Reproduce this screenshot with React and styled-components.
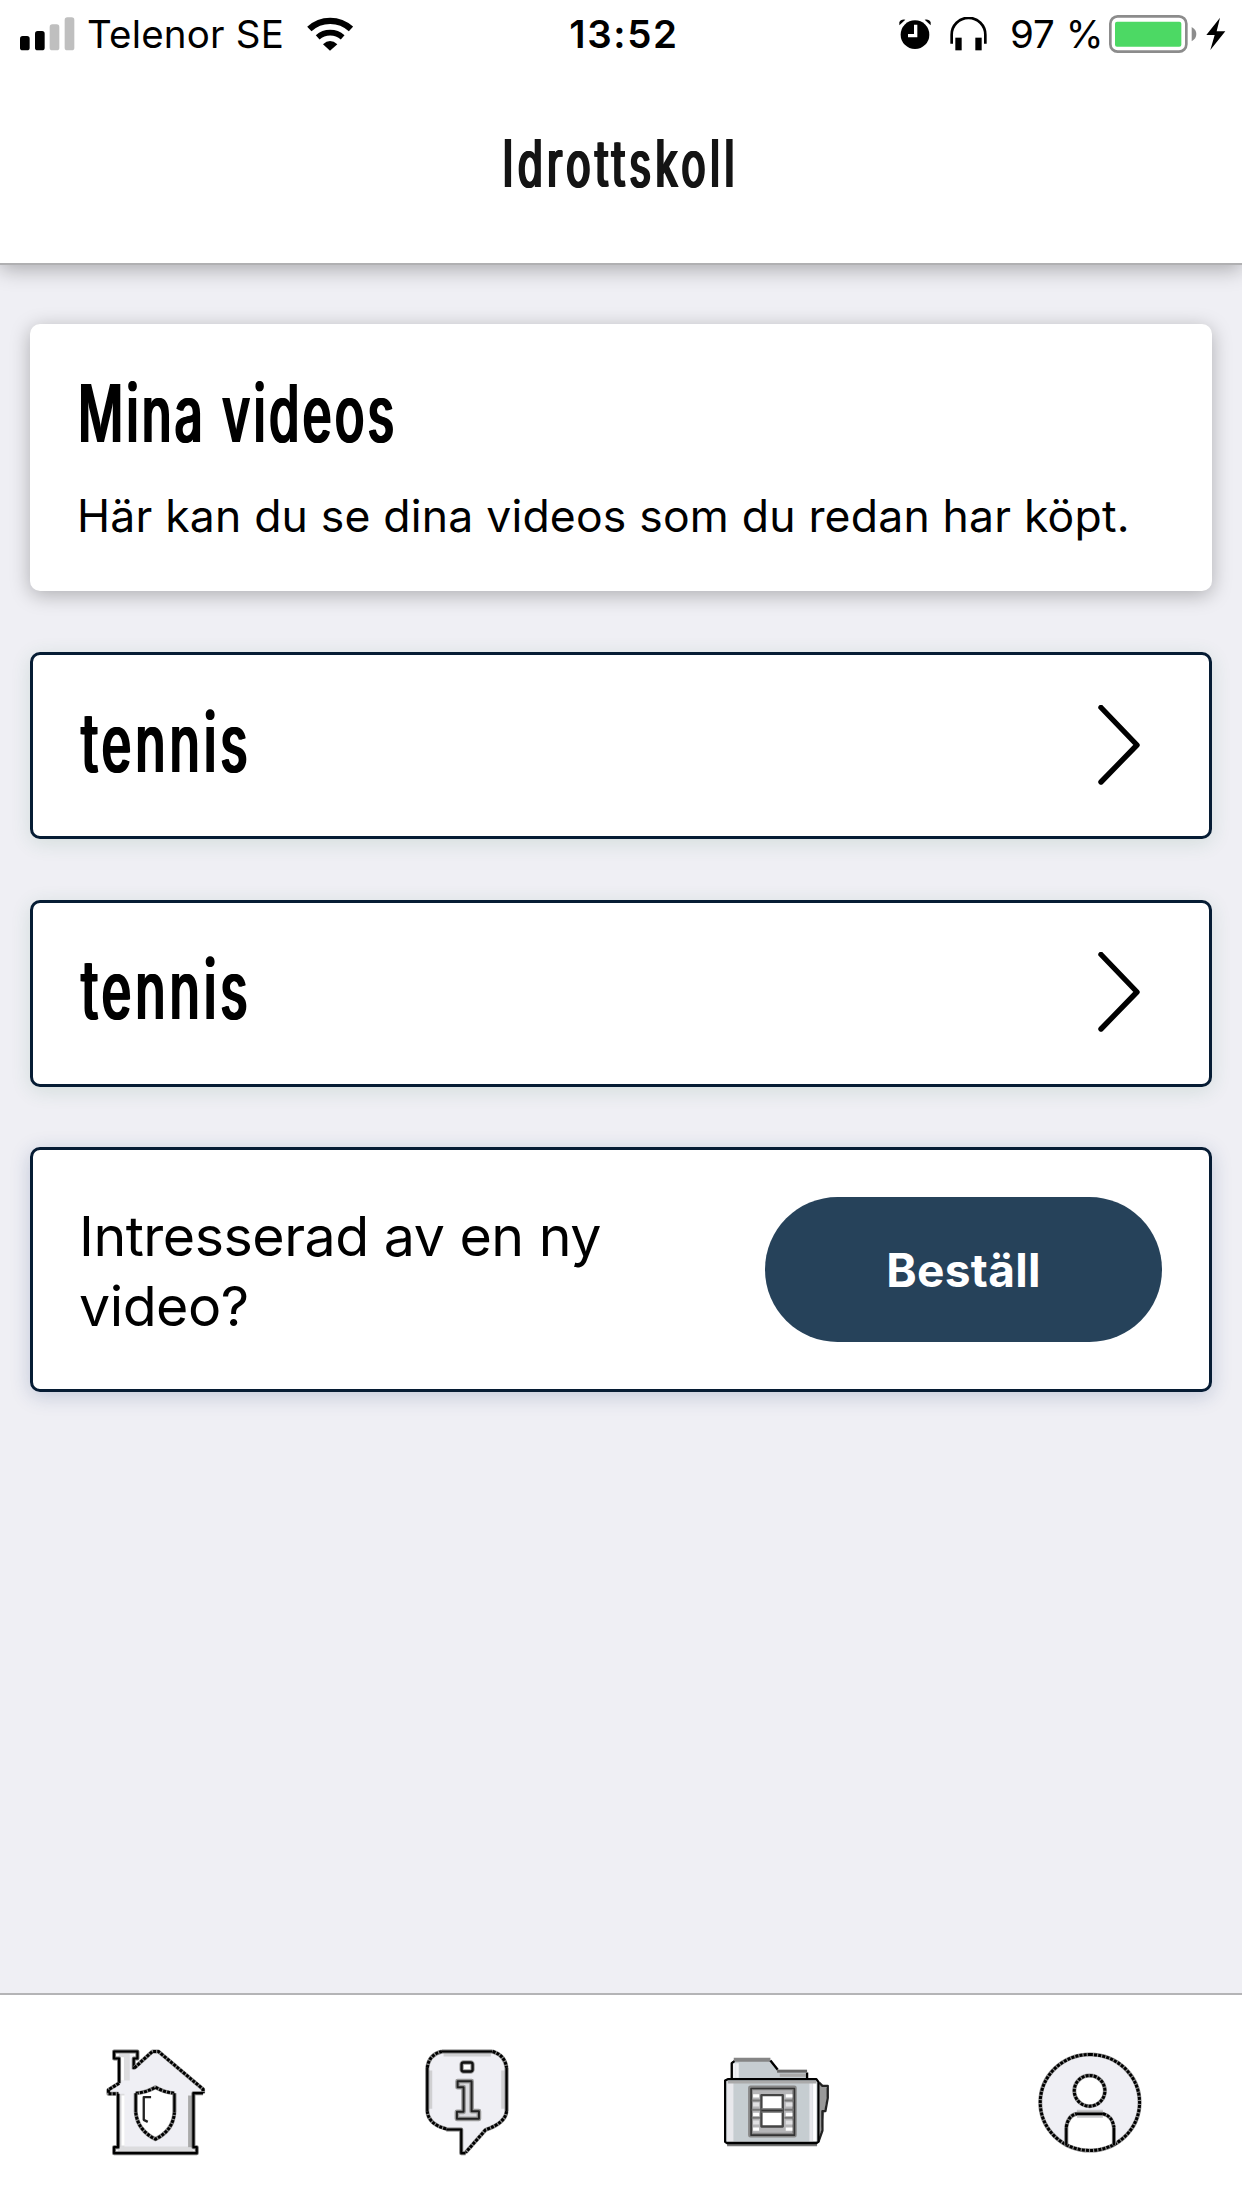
import React from "react";
import styled, { createGlobalStyle } from "styled-components";

const GlobalStyle = createGlobalStyle`
  * { box-sizing: border-box; }
  body { margin: 0; background: #efeff4; }
`;

const Screen = styled.div`
  width: 1242px;
  height: 2208px;
  display: flex;
  flex-direction: column;
  background: #efeff4;
  color: #000;
  font-family: Inter, "Liberation Sans", sans-serif;
  overflow: hidden;
`;

const Header = styled.header`
  flex: none;
  height: 265px;
  background: #fff;
  border-bottom: 2px solid #b0b0b2;
  box-shadow: 0 4px 20px rgba(0, 0, 0, 0.3);
`;

const StatusBar = styled.div`
  height: 68px;
  display: grid;
  grid-template-columns: 1fr auto 1fr;
  align-items: center;
  padding: 0 16px 0 20px;
  font-size: 38.5px;
  line-height: 68px;
`;

const StatusGroup = styled.div`
  display: flex;
  align-items: center;
  justify-content: ${(p) => (p.$end ? "flex-end" : "flex-start")};
`;

const StatusText = styled.span`
  width: ${(p) => p.$width}px;
  margin-left: ${(p) => p.$gap}px;
  letter-spacing: ${(p) => p.$spacing || 0}px;
  white-space: nowrap;
`;

const Clock = styled.time`
  font-weight: 600;
  padding-left: 2px;
  letter-spacing: 1.6px;
`;

const Glyph = styled.svg`
  display: block;
  flex: none;
  margin-left: ${(p) => p.$gap || 0}px;
`;

const TitleBar = styled.div`
  height: 195px;
  display: flex;
  justify-content: center;
  padding-top: 56px;
`;

const Condensed = styled.span`
  display: block;
  white-space: nowrap;
  font-family: Inter, "Liberation Sans", sans-serif;
  font-weight: 500;
  line-height: 1.2;
  font-size: ${(p) => p.$size}px;
  letter-spacing: ${(p) => p.$spacing || 0}px;
  transform: scaleX(${(p) => p.$scale});
  transform-origin: ${(p) => p.$origin || "left"} center;
  text-shadow: 1.5px 0 0 currentColor, -1.5px 0 0 currentColor;
`;

const PageTitle = styled(Condensed).attrs({ as: "h1" })`
  margin: 0;
  color: #141414;
`;

const Heading = styled(Condensed).attrs({ as: "h2" })`
  margin: ${(p) => p.$lift || 0}px 0 0 ${(p) => p.$shift || 0}px;
`;

const Content = styled.main`
  flex: 1;
  display: flex;
  flex-direction: column;
  padding: 59px 30px 0;
`;

const IntroCard = styled.section`
  height: 267px;
  margin-bottom: 61px;
  padding: 41px 49px 0;
  background: #fff;
  border-radius: 10px;
  box-shadow: 0 4px 20px rgba(0, 0, 0, 0.28);
`;

const IntroText = styled.p`
  margin: 25px 0 0 -2px;
  font-size: 44.5px;
  line-height: 60px;
  letter-spacing: 0.2px;
  white-space: nowrap;
`;

const OutlinedCard = styled.section`
  height: ${(p) => p.$height}px;
  margin-bottom: 60.5px;
  display: flex;
  align-items: center;
  justify-content: space-between;
  padding: 0 ${(p) => p.$right}px 0 47px;
  background: #fff;
  border: 3px solid #061c34;
  border-radius: 10px;
  box-shadow: 0 4px 20px ${(p) => p.$glow};
`;

const Question = styled.p`
  width: 560px;
  margin: 2px 0 0 -1px;
  font-size: 55.5px;
  line-height: 69.5px;
  letter-spacing: -0.5px;
`;

const OrderButton = styled.button`
  width: 397px;
  height: 145px;
  border: 0;
  border-radius: 73px;
  background: #26425a;
  color: #fff;
  font: 700 46px/1 Inter, "Liberation Sans", sans-serif;
  letter-spacing: 0.3px;
`;

const TabBar = styled.nav`
  flex: none;
  height: 215px;
  display: grid;
  grid-template-columns: repeat(4, 1fr);
  background: #fff;
  border-top: 2px solid #b4b4b6;
`;

const Tab = styled.a`
  display: flex;
  align-items: center;
  justify-content: center;
`;

const TabIcon = styled.svg`
  width: 106px;
  height: 106px;
  overflow: visible;
  fill: none;
  stroke-linejoin: round;
`;

const Edge = ({ d, fill = "none", dash }) => (
  <>
    <path d={d} fill={fill} stroke={dash ? "#8c8c8c" : "#777"} strokeWidth="12" />
    <path d={d} stroke="#000" strokeWidth={dash ? 9 : 6.5} strokeDasharray={dash ? "9 3.5" : undefined} />
  </>
);

const SignalIcon = () => (
  <Glyph width="55" height="34" viewBox="60 48 165 102">
    <rect x="60" y="105" width="29" height="43" rx="8" />
    <rect x="105" y="90" width="29" height="58" rx="8" />
    <rect x="149" y="70" width="29" height="78" rx="8" fill="#bfbfbf" />
    <rect x="194" y="49" width="29" height="99" rx="8" fill="#bfbfbf" />
  </Glyph>
);

const WifiIcon = () => (
  <Glyph width="46" height="34" viewBox="919 48 138 102">
    <path d="M926 84A92 92 0 0 1 1051 84" fill="none" stroke="#000" strokeWidth="19" />
    <path d="M951 109A57 57 0 0 1 1026 109" fill="none" stroke="#000" strokeWidth="17" />
    <path d="M967 130Q988 110 1010 130L988 149Z" />
  </Glyph>
);

const AlarmIcon = () => (
  <Glyph width="32" height="32" viewBox="57 51 96 96">
    <circle cx="105" cy="101" r="43" />
    <path d="M58 73V64Q62 54 76 56ZM152 73V64Q148 54 134 56Z" />
    <path d="M107 71V104H84" fill="none" stroke="#fff" strokeWidth="10" />
  </Glyph>
);

const HeadphonesIcon = () => (
  <Glyph $gap={19} width="37" height="34" viewBox="211 49 111 102">
    <path d="M216 129V102A50 50 0 0 1 317 102V129" fill="none" stroke="#000" strokeWidth="8" />
    <rect x="227" y="111" width="19" height="38" />
    <rect x="287" y="111" width="19" height="38" />
  </Glyph>
);

const BatteryIcon = () => (
  <Glyph width="88" height="38" viewBox="690 44 264 114">
    <rect x="694" y="48" width="228" height="106" rx="22" fill="#fff" stroke="#8c8c8c" strokeWidth="8" />
    <rect x="708" y="64" width="199" height="75" rx="6" fill="#4cd964" />
    <path d="M938 80Q952 88 952 101Q952 115 938 123Z" fill="#8c8c8c" />
  </Glyph>
);

const BoltIcon = () => (
  <Glyph $gap={9} width="20" height="34" viewBox="979 49 60 102">
    <path d="M1021 51L980 103H1005L992 148L1037 92H1011Z" />
  </Glyph>
);

const Chevron = () => (
  <Glyph width="45" height="82" viewBox="0 0 45 82">
    <path d="M3 2.5L39 40L3 77" fill="none" stroke="#000" strokeWidth="5.4" strokeLinecap="round" strokeLinejoin="round" />
  </Glyph>
);

const HouseIcon = () => (
  <TabIcon viewBox="66.75 205.5 318 318">
    <path d="M114 222H163V256L226 213L370 332H341V508H114V340H86L118 308Z" fill="#efeff4" />
    <path d="M118 220H150V300H118ZM118 340H134V502H118ZM114 498H341V514H114Z" fill="#dcdcde" />
    <path d="M128 230V300M130 345V495" stroke="#fff" strokeWidth="9" />
    <path d="M331 345V500" stroke="#aaa" strokeWidth="12" />
    <Edge d="M118 308V234H103V213H173V234H162V266" />
    <Edge dash d="M164 262L218 213H236L370 326V338" />
    <Edge dash d="M118 308L86 328V340H116" />
    <Edge d="M370 338H341V500H351V518H103V500H115V340" />
    <path d="M168 338Q200 336 227 322Q254 336 284 338V400Q280 450 227 474Q174 450 168 400Z" fill="#fff" />
    <Edge dash d="M168 338Q200 336 227 320Q254 336 284 338" />
    <Edge d="M168 338V396M284 338V396" />
    <Edge dash d="M168 396Q174 450 227 476Q280 450 284 396" />
    <path d="M214 350H192V418L204 424" stroke="#222" strokeWidth="7" />
  </TabIcon>
);

const InfoIcon = () => (
  <TabIcon viewBox="68.25 205.5 318 318">
    <path d="M160 213H302Q350 222 350 270V390Q350 425 290 448L224 518H212V446H160Q110 430 110 390V270Q112 222 160 213Z" fill="#efeff4" />
    <path d="M160 223H302M121 270V385M338 270V385" stroke="#d0d0d2" strokeWidth="10" />
    <Edge d="M155 213H307" />
    <Edge dash d="M307 213Q344 224 349 262" />
    <Edge d="M349 262V392" />
    <Edge dash d="M349 392Q345 428 286 448L226 516" />
    <Edge d="M226 518H213V447H168" />
    <Edge dash d="M168 445Q115 432 111 392" />
    <Edge d="M111 392V262" />
    <Edge dash d="M111 262Q116 222 155 213" />
    <path d="M202 302H244V392H266V415H200V394H220V320H202Z" fill="#dcdce0" stroke="#999" strokeWidth="14" />
    <path d="M202 302H244V392H266V415H200V394H220V320H202Z" stroke="#222" strokeWidth="6" />
    <rect x="214" y="246" width="33" height="27" rx="6" fill="#fff" stroke="#999" strokeWidth="13" />
    <rect x="214" y="246" width="33" height="27" rx="6" stroke="#111" strokeWidth="7" />
  </TabIcon>
);

const FolderIcon = () => (
  <TabIcon viewBox="69.75 205.5 318 318">
    <path d="M356 308L386 324L364 452L354 480Z" fill="#999" />
    <path d="M358 306L368 316H384V352L377 392H368V450L356 484" stroke="#222" strokeWidth="7" />
    <path d="M96 296V244L106 238H212L234 272H318L326 296Z" fill="#c6cdd1" />
    <path d="M104 292V248M113 292V248" stroke="#f1f1f4" strokeWidth="8" />
    <path d="M240 284H318" stroke="#aaa" strokeWidth="10" />
    <path d="M102 238H212" stroke="#858585" strokeWidth="12" />
    <path d="M96 296V248L104 242M212 240L234 268M322 276V294" stroke="#000" strokeWidth="7" />
    <path d="M232 272H322" stroke="#666" strokeWidth="9" />
    <rect x="76" y="297" width="280" height="194" rx="6" fill="#c6cdd1" />
    <path d="M87 302V484M96 302V484M334 302V484" stroke="#e8e8ec" strokeWidth="10" />
    <path d="M345 304V482" stroke="#fff" strokeWidth="10" />
    <path d="M84 305H350" stroke="#aaa" strokeWidth="8" />
    <path d="M82 490H352" stroke="#777" strokeWidth="14" />
    <path d="M76 484V300L84 296H350L356 304V484L350 488H82Z" stroke="#000" strokeWidth="6.5" />
    <path d="M152 322H284V464H152Z" fill="#b5b5b7" stroke="#888" strokeWidth="14" />
    <path d="M154 324H284V464H154Z" stroke="#333" strokeWidth="5" />
    <path d="M160 346H178M160 402H178M160 446H178M258 346H278M258 402H278M258 446H278" stroke="#fff" strokeWidth="10" />
    <path d="M160 372H178M160 426H178M258 372H278M258 426H278" stroke="#e0e0e2" strokeWidth="12" />
    <path d="M156 360H182M156 388H182M156 412H182M254 360H282M254 388H282M254 412H282" stroke="#777" strokeWidth="6" />
    <rect x="185" y="344" width="64" height="94" fill="#fff" stroke="#444" strokeWidth="7" />
    <path d="M185 390H249" stroke="#777" strokeWidth="14" />
    <path d="M185 390H249" stroke="#333" strokeWidth="5" />
  </TabIcon>
);

const ProfileIcon = () => (
  <TabIcon viewBox="1001.25 205.5 318 318">
    <ellipse cx="1169" cy="366" rx="148" ry="144" fill="#efeff4" />
    <path d="M1098 490V440Q1104 402 1130 400H1208Q1236 404 1240 440V490Q1169 530 1098 490Z" fill="#fff" />
    <Edge dash d="M1169 222A149 144 0 0 1 1169 510A149 144 0 0 1 1169 222Z" />
    <Edge dash fill="#fff" d="M1168 285A46 46 0 0 1 1168 377A46 46 0 0 1 1168 285Z" />
    <path d="M1130 392H1208M1130 408H1208" stroke="#c8c8ca" strokeWidth="8" />
    <Edge d="M1098 494V440M1130 400H1208M1241 440V494" />
    <Edge dash d="M1098 440Q1104 404 1130 400M1208 400Q1236 406 1241 440" />
  </TabIcon>
);

const tabs = [
  { id: "home", Icon: HouseIcon },
  { id: "info", Icon: InfoIcon },
  { id: "videos", Icon: FolderIcon },
  { id: "profile", Icon: ProfileIcon },
];

const videos = [
  { id: 1, name: "tennis" },
  { id: 2, name: "tennis" },
];

export default function App() {
  return (
    <Screen>
      <GlobalStyle />
      <Header>
        <StatusBar>
          <StatusGroup>
            <SignalIcon />
            <StatusText $gap={12} $width={220} $spacing={0.2}>Telenor SE</StatusText>
            <WifiIcon />
          </StatusGroup>
          <Clock>13:52</Clock>
          <StatusGroup $end>
            <AlarmIcon />
            <HeadphonesIcon />
            <StatusText $gap={23} $width={99}>97 %</StatusText>
            <BatteryIcon />
            <BoltIcon />
          </StatusGroup>
        </StatusBar>
        <TitleBar>
          <PageTitle $size={66} $scale={0.62} $spacing={6.5} $origin="center">Idrottskoll</PageTitle>
        </TitleBar>
      </Header>
      <Content>
        <IntroCard>
          <Heading $size={80} $scale={0.62} $spacing={4.8} $shift={-1}>Mina videos</Heading>
          <IntroText>Här kan du se dina videos som du redan har köpt.</IntroText>
        </IntroCard>
        {videos.map((video) => (
          <OutlinedCard key={video.id} $height={187} $right={66} $glow="rgba(40, 110, 80, 0.14)">
            <Heading $size={82} $scale={0.62} $spacing={6} $lift={-5} $shift={1}>{video.name}</Heading>
            <Chevron />
          </OutlinedCard>
        ))}
        <OutlinedCard $height={245} $right={47} $glow="rgba(30, 60, 120, 0.22)">
          <Question>Intresserad av en ny video?</Question>
          <OrderButton>Beställ</OrderButton>
        </OutlinedCard>
      </Content>
      <TabBar>
        {tabs.map(({ id, Icon }) => (
          <Tab key={id}>
            <Icon />
          </Tab>
        ))}
      </TabBar>
    </Screen>
  );
}
